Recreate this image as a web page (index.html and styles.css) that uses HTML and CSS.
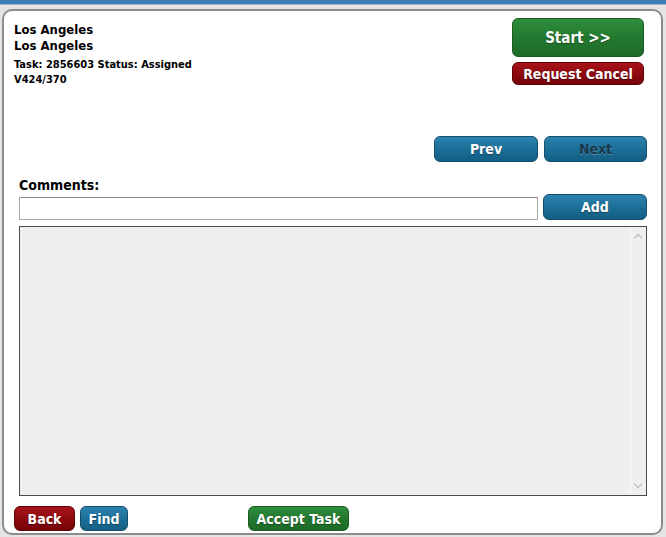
FILE: index.html
```
<!DOCTYPE html>
<html>

<head>
    <title>Task</title>
    <link rel="stylesheet" href="styles.css">
</head>

<body>
    <div class="top-bar"></div>
    <div class="panel">
        <div class="header">
            <div class="info">
                <div class="city">Los Angeles</div>
                <div class="city">Los Angeles</div>
                <div class="task-line">Task: 2856603 Status: Assigned</div>
                <div class="task-line">V424/370</div>
            </div>
            <div class="header-buttons">
                <button type="button" class="btn green start-btn">Start &gt;&gt;</button>
                <button type="button" class="btn red cancel-btn">Request Cancel</button>
            </div>
        </div>
        <div class="nav-buttons">
            <button type="button" class="btn blue nav-btn">Prev</button>
            <button type="button" class="btn blue nav-btn disabled">Next</button>
        </div>
        <div class="comments">
            <label for="commentInput" class="comments-label">Comments:</label>
            <div class="comment-row">
                <input type="text" id="commentInput" class="comment-input">
                <button type="button" class="btn blue nav-btn">Add</button>
            </div>
            <div class="comment-list">
                <div class="scroll-track">
                    <span class="arrow up"></span>
                    <span class="arrow down"></span>
                </div>
            </div>
        </div>
        <div class="footer">
            <button type="button" class="btn red back-btn">Back</button>
            <button type="button" class="btn blue find-btn">Find</button>
            <button type="button" class="btn green accept-btn">Accept Task</button>
        </div>
    </div>
</body>

</html>
```

FILE: styles.css
```
body {
    margin: 0;
    background-color: #e4e4e4;
    font-family: Tahoma, "DejaVu Sans Condensed", "DejaVu Sans", sans-serif;
    color: #000;
}

.top-bar {
    height: 4px;
    background-color: #3b7cb3;
    border-bottom: 1px solid #9fb6c8;
}

.panel {
    box-sizing: border-box;
    height: 526px;
    margin: 4px 3px 0 2px;
    border: 2px solid #8c8c8c;
    border-radius: 10px;
    background-color: #fff;
    display: flex;
    flex-direction: column;
}

.header {
    display: flex;
    justify-content: space-between;
    padding: 7px 17px 0 10px;
}

.info {
    padding-top: 4px;
}

.city {
    font-weight: bold;
    font-size: 13px;
    line-height: 16px;
}

.task-line {
    font-weight: bold;
    font-size: 11px;
    line-height: 15px;
}

.task-line:nth-child(3) {
    margin-top: 3px;
}

.header-buttons {
    display: flex;
    flex-direction: column;
    gap: 5px;
}

.btn {
    box-sizing: border-box;
    font-family: inherit;
    font-weight: bold;
    color: #fff;
    border-radius: 6px;
    padding: 0;
    cursor: pointer;
    text-shadow: 0 1px 1px rgba(0, 0, 0, 0.35);
}

.green {
    background: linear-gradient(to bottom, #2f8e3c 0%, #23782f 50%, #1d6a28 100%);
    border: 1px solid #1a5c24;
}

.red {
    background: linear-gradient(to bottom, #a8141a 0%, #8d0a0f 50%, #760308 100%);
    border: 1px solid #5e0206;
}

.blue {
    background: linear-gradient(to bottom, #2c83ae 0%, #1c6f98 50%, #145e84 100%);
    border: 1px solid #144e6c;
}

.start-btn {
    width: 132px;
    height: 39px;
    font-size: 15px;
}

.cancel-btn {
    width: 132px;
    height: 23px;
    font-size: 14px;
}

.nav-buttons {
    display: flex;
    justify-content: flex-end;
    gap: 6px;
    padding-right: 14px;
    margin-top: 49px;
}

.nav-btn {
    width: 104px;
    height: 26px;
    font-size: 14px;
}

.nav-btn.disabled {
    width: 103px;
    color: #17394e;
    text-shadow: 0 1px 0 rgba(255, 255, 255, 0.25);
    cursor: default;
}

.comments {
    padding: 0 14px 0 15px;
    margin-top: 14px;
}

.comments-label {
    display: block;
    font-weight: bold;
    font-size: 14px;
    line-height: 18px;
}

.comment-row {
    display: flex;
    justify-content: space-between;
    align-items: flex-start;
}

.comment-input {
    box-sizing: border-box;
    width: 519px;
    height: 23px;
    margin: 3px 0 0 0;
    border: 1px solid #a8a8a8;
    border-top-color: #8f8f8f;
    padding: 2px 4px;
}

.comment-list {
    box-sizing: border-box;
    height: 270px;
    margin-top: 6px;
    border: 1px solid #4a4a4a;
    background-color: #efefef;
    display: flex;
    justify-content: flex-end;
}

.scroll-track {
    position: relative;
    width: 15px;
    border-left: 1px solid #fafafa;
    background-color: #efefef;
}

.arrow {
    position: absolute;
    left: 4px;
    width: 5px;
    height: 5px;
    border-left: 1px solid #b4b4b4;
    border-top: 1px solid #b4b4b4;
}

.arrow.up {
    top: 8px;
    transform: rotate(45deg);
}

.arrow.down {
    bottom: 8px;
    transform: rotate(225deg);
}

.footer {
    display: flex;
    align-items: center;
    padding-left: 10px;
    margin-top: 10px;
}

.back-btn,
.find-btn,
.accept-btn {
    height: 25px;
    font-size: 14px;
}

.back-btn {
    width: 61px;
    margin-right: 5px;
}

.find-btn {
    width: 48px;
}

.accept-btn {
    width: 101px;
    margin-left: 120px;
}
```
